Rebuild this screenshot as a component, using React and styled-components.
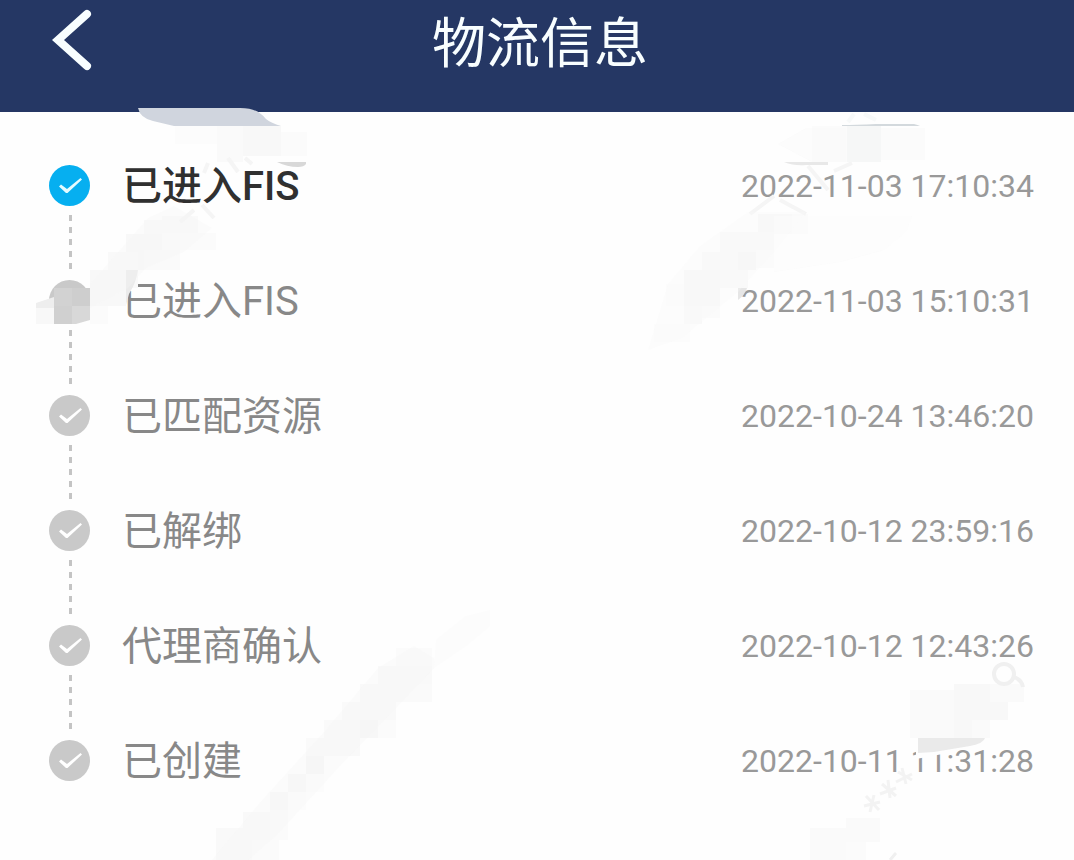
import React from "react";
import styled, { createGlobalStyle } from "styled-components";

const GlobalStyle = createGlobalStyle`
  * {
    box-sizing: border-box;
  }

  body {
    margin: 0;
    background: #fefefe;
    font-family: Roboto, "Noto Sans CJK SC", sans-serif;
  }
`;

const Page = styled.div`
  position: relative;
  min-height: 100vh;
  overflow: hidden;
`;

const Header = styled.header`
  display: grid;
  grid-template-columns: 1fr auto 1fr;
  align-items: start;
  height: 112px;
  padding: 4px 42px 0 48px;
  background: #253764;
`;

const BackButton = styled.button`
  display: flex;
  width: 48px;
  padding: 4px 0 0;
  border: 0;
  background: none;
  cursor: pointer;
`;

const Title = styled.h1`
  margin: 0;
  font-size: 54px;
  font-weight: 400;
  line-height: 82px;
  color: #f8feff;
`;

const Timeline = styled.ol`
  margin: 0;
  padding: 53px 40px 0 49px;
  list-style: none;
`;

const Step = styled.li`
  display: grid;
  grid-template-columns: 41px 1fr auto;
  column-gap: 32px;
  height: 115px;
`;

const Marker = styled.div`
  display: flex;
  flex-direction: column;
  align-items: center;
  gap: 9px;
`;

const Dot = styled.svg`
  display: block;
  width: 41px;
  height: 41px;
  fill: ${(props) => (props.$active ? "#06aff0" : "#c9c9c9")};
`;

const Connector = styled.div`
  width: 3px;
  height: 54px;
  margin-left: 2px;
  background: repeating-linear-gradient(
    to bottom,
    #c4c4c4 0 6px,
    transparent 6px 12px
  );
`;

const Label = styled.span`
  font-size: 40px;
  line-height: 44px;
  font-weight: ${(props) => (props.$active ? 500 : 400)};
  color: ${(props) => (props.$active ? "#303030" : "#888888")};
`;

const Time = styled.time`
  font-size: 32px;
  line-height: 43px;
  color: #999999;
`;

const Watermark = styled.svg`
  position: absolute;
  top: 0;
  ${(props) => props.$side}: 0;
  height: 860px;
  pointer-events: none;
`;

const steps = [
  { label: "已进入FIS", time: "2022-11-03 17:10:34", active: true },
  { label: "已进入FIS", time: "2022-11-03 15:10:31", plain: true },
  { label: "已匹配资源", time: "2022-10-24 13:46:20" },
  { label: "已解绑", time: "2022-10-12 23:59:16" },
  { label: "代理商确认", time: "2022-10-12 12:43:26" },
  { label: "已创建", time: "2022-10-11 11:31:28" },
];

// mosaic tiles: x, y, width, height, colour
const leftTiles = [
  [175, 126, 42, 18, "#fcfcfc"],
  [217, 126, 26, 36, "#fafafa"],
  [243, 126, 38, 30, "#f8f8f8"],
  [281, 132, 26, 24, "#fbfbfb"],
  [162, 216, 36, 17, "#fafafa"],
  [144, 220, 36, 30, "#f9f9f9"],
  [126, 234, 36, 36, "#f8f8f8"],
  [162, 233, 54, 17, "#fbfbfb"],
  [108, 252, 30, 36, "#f9f9f9"],
  [144, 250, 36, 20, "#fafafa"],
  [90, 270, 36, 36, "#f8f8f8"],
  [90, 306, 18, 18, "#fbfbfb"],
  [54, 288, 18, 18, "#d2d2d2"],
  [72, 288, 18, 18, "#cecece"],
  [54, 306, 18, 18, "#d0d0d0"],
  [72, 306, 18, 18, "#d8d8d8"],
  [36, 306, 18, 18, "#f8f8f8"],
  [396, 648, 36, 18, "#fbfbfb"],
  [378, 666, 54, 18, "#f9f9f9"],
  [396, 684, 36, 18, "#fafafa"],
  [360, 684, 36, 36, "#f9f9f9"],
  [342, 702, 18, 36, "#fafafa"],
  [360, 720, 18, 18, "#f7f7f7"],
  [378, 720, 18, 18, "#fbfbfb"],
  [324, 720, 18, 36, "#fafafa"],
  [342, 738, 18, 18, "#f9f9f9"],
  [306, 738, 18, 36, "#fafafa"],
  [306, 756, 18, 18, "#f6f6f6"],
  [288, 774, 18, 18, "#f8f8f8"],
  [306, 774, 18, 18, "#fcfcfc"],
  [270, 792, 18, 18, "#f8f8f8"],
  [288, 792, 18, 18, "#fcfcfc"],
  [243, 812, 27, 32, "#f9f9f9"],
  [270, 810, 18, 30, "#fbfbfb"],
  [216, 828, 36, 32, "#f9f9f9"],
  [252, 840, 27, 20, "#fbfbfb"],
];

const rightTiles = [
  [172, 126, 35, 36, "#fbfbfb"],
  [207, 126, 34, 36, "#f6f7f7"],
  [241, 128, 44, 32, "#fbfbfb"],
  [118, 214, 34, 20, "#f8f8f8"],
  [152, 214, 16, 20, "#fbfbfb"],
  [80, 232, 54, 20, "#fafafa"],
  [80, 252, 18, 20, "#f9f9f9"],
  [98, 252, 18, 18, "#f6f6f6"],
  [116, 250, 18, 18, "#fbfbfb"],
  [62, 252, 36, 18, "#fafafa"],
  [44, 270, 36, 36, "#f8f8f8"],
  [80, 270, 28, 18, "#f9f9f9"],
  [26, 284, 18, 22, "#fcfcfc"],
  [44, 306, 18, 18, "#f9f9f9"],
  [62, 306, 18, 12, "#fbfbfb"],
  [14, 324, 36, 18, "#fcfcfc"],
  [270, 690, 44, 48, "#fafafa"],
  [314, 684, 18, 54, "#f8f8f8"],
  [332, 684, 36, 36, "#f8f8f8"],
  [350, 684, 34, 18, "#fafafa"],
  [332, 720, 18, 18, "#fafafa"],
  [206, 818, 34, 24, "#fafafa"],
  [170, 828, 36, 32, "#fafafa"],
  [206, 842, 20, 18, "#fbfbfb"],
];

const Tiles = ({ items }) =>
  items.map(([x, y, width, height, fill]) => (
    <rect key={`${x}-${y}-${width}`} x={x} y={y} width={width} height={height} fill={fill} />
  ));

const LeftWatermark = () => (
  <Watermark $side="left" width="520" viewBox="0 0 520 860" aria-hidden="true">
    <g shapeRendering="crispEdges">
      <Tiles items={leftTiles} />
    </g>
    <path
      d="M138 108H240C254 108 260 112 266 119Q271 123 281 126H174L153 121Q140 118 138 108Z"
      fill="#d0d5de"
    />
    <path d="M277 162H306V164Q304 167 298 167Q287 167 277 162Z" fill="#d8d8d8" />
    <path d="M36 303L54 297V308H36Z" fill="#eeeeee" />
    <path d="M76 324L90 320V325H76Z" fill="#fefefe" />
    <path d="M126 270H138Q136 283 129 294L126 305Z" fill="#ebebeb" />
    <path d="M90 284L148 218L174 206L212 228L184 252L146 268L128 288L90 308Z" fill="#f4f4f4" opacity=".3" />
    <path d="M210 862L264 798L324 732L378 668L414 646L440 662L398 706L340 766L276 836L246 862Z" fill="#f6f6f6" opacity=".3" />
    <path d="M436 640L466 616L490 610V626L466 646L434 668Z" fill="#fcfcfc" />
    <path
      d="M180 222L194 210M202 205L214 218M204 173L208 163M228 158L238 172M245 158L252 164"
      fill="none"
      stroke="#f5f5f5"
      strokeWidth="4"
    />
  </Watermark>
);

const RightWatermark = () => (
  <Watermark $side="right" width="434" viewBox="0 0 434 860" aria-hidden="true">
    <g shapeRendering="crispEdges">
      <Tiles items={rightTiles} />
    </g>
    <path d="M202 125Q215 125 236 124H274Q278 125 280 126H202Z" fill="#d3d9dd" />
    <path d="M138 144L166 128H206V162H172Z" fill="#fafafa" opacity=".5" />
    <path d="M144 162H188V165H166Q154 166 144 162Z" fill="#e8e8e8" />
    <path d="M168 166L188 190M194 171L212 163M110 214L134 196M140 200L166 214" fill="none" stroke="#f5f5f5" strokeWidth="4" />
    <path d="M208 122L214 114M224 114L236 120" fill="none" stroke="#f7f9f9" strokeWidth="4" />
    <path d="M98 288H107Q105 295 98 300Z" fill="#e6e6e6" />
    <path d="M8 350L28 284L60 246L108 212H166L134 252L98 292L42 338Z" fill="#f8f8f8" opacity=".3" />
    <path d="M134 216H272L266 232L244 250L200 262L134 272Z" fill="#fcfcfc" opacity=".5" />
    {/* blanked area over the last time value */}
    <path d="M276 745H308V753L292 756L276 759Z" fill="#fefefe" />
    <path d="M278 738H345Q344 743 330 746L294 752L278 753Z" fill="#eaeaea" />
    <g fill="none" stroke="#f0f0f0" strokeWidth="4">
      <circle cx="364" cy="674" r="10" />
      <path d="M374 677Q382 680 383 687" />
    </g>
    <path
      d="M224 806L240 802M234 795L230 812M226 796L239 810M240 794L256 788M248 780L250 798M242 784L256 796M256 782L272 774M262 768L266 784M258 772L272 780"
      fill="none"
      stroke="#f3f3f3"
      strokeWidth="3"
    />
    <path d="M250 860L256 853" stroke="#f0f0f0" strokeWidth="3" />
  </Watermark>
);

const StatusDot = ({ active, plain }) => (
  <Dot $active={active} viewBox="0 0 41 41" aria-hidden="true">
    <circle cx="20.5" cy="20.5" r="20.5" />
    {!plain && (
      <path
        d="M10 21.5L12 19.5L18 24L31.5 13L33 14.5L18.5 28H17Z"
        fill={active ? "#e4fbff" : "#ffffff"}
      />
    )}
  </Dot>
);

const App = () => {
  return (
    <Page>
      <GlobalStyle />
      <Header>
        <BackButton type="button" aria-label="返回">
          <svg width="48" height="64" viewBox="0 0 48 64" aria-hidden="true">
            <path
              d="M39 6L10 32L39 58"
              fill="none"
              stroke="#f8feff"
              strokeWidth="8"
              strokeLinecap="round"
              strokeLinejoin="miter"
            />
          </svg>
        </BackButton>
        <Title>物流信息</Title>
      </Header>
      <Timeline>
        {steps.map((step, index) => (
          <Step key={step.time}>
            <Marker>
              <StatusDot active={step.active} plain={step.plain} />
              {index < steps.length - 1 && <Connector />}
            </Marker>
            <Label $active={step.active}>{step.label}</Label>
            <Time>{step.time}</Time>
          </Step>
        ))}
      </Timeline>
      <LeftWatermark />
      <RightWatermark />
    </Page>
  );
};

export default App;
